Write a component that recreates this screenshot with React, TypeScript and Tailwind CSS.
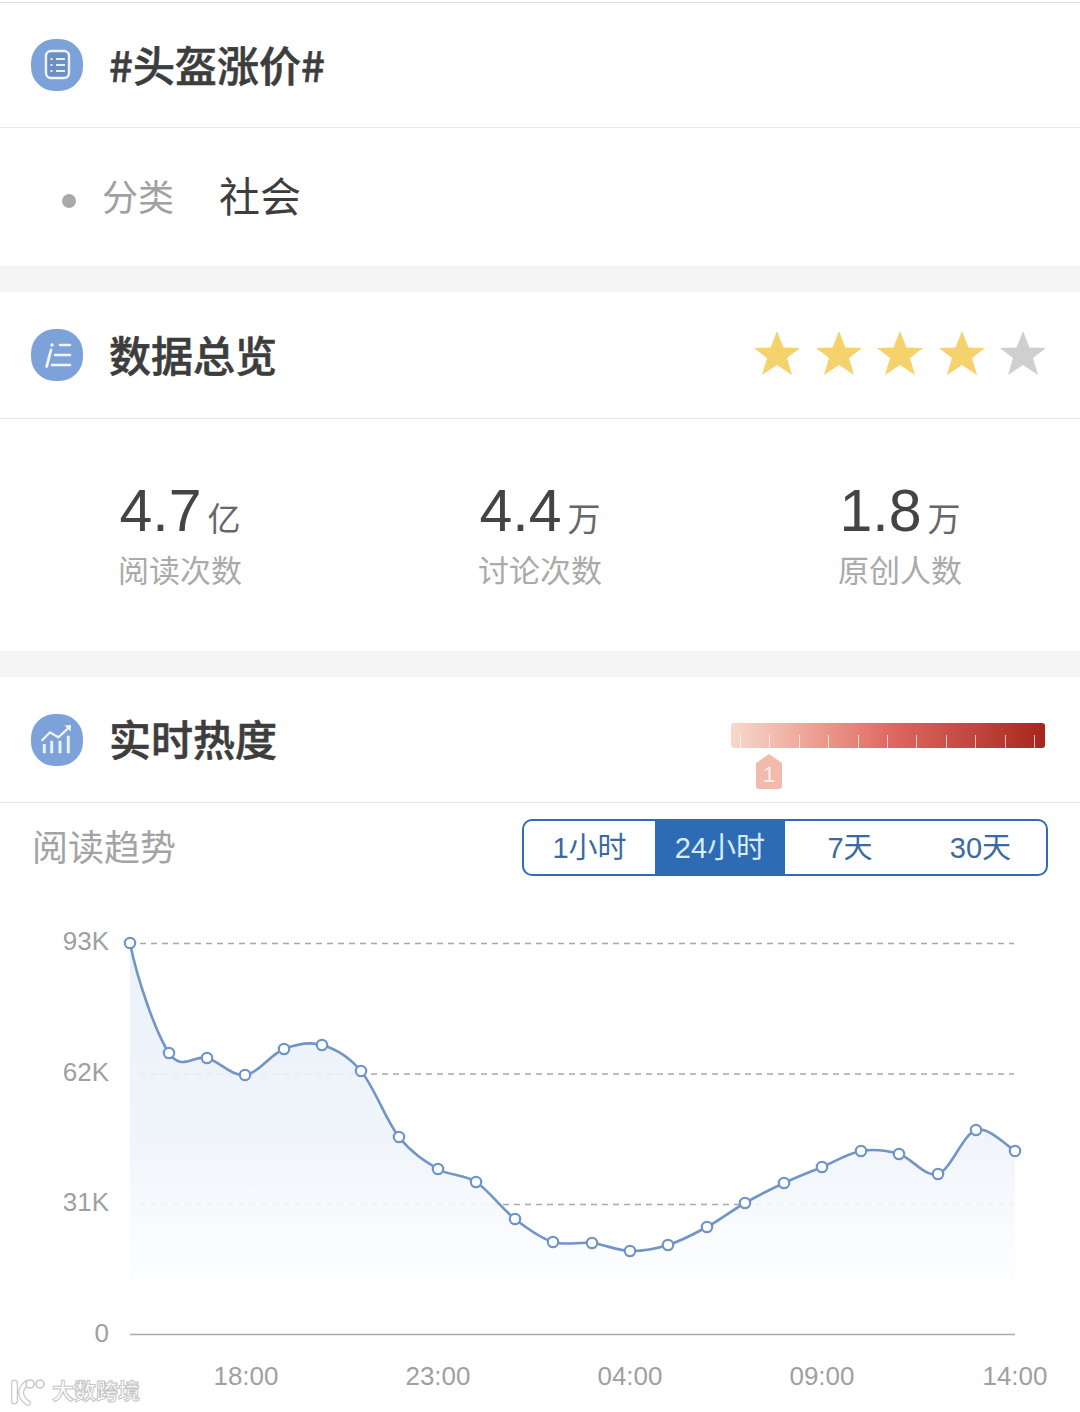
const points: [number, number][] = [
  [130, 943], [169, 1053], [207, 1058], [245, 1075], [284, 1049], [322, 1045],
  [361, 1071], [399, 1137], [438, 1169], [476, 1182], [515, 1219], [553, 1242],
  [592, 1243], [630, 1251], [668, 1245], [707, 1227], [745, 1203], [784, 1183],
  [822, 1167], [861, 1151], [899, 1154], [938, 1174], [976, 1130], [1015, 1151],
];

// catmull-rom through the points, first point leaves almost straight down
function smoothLine(pts: [number, number][]) {
  let d = `M${pts[0][0]} ${pts[0][1]}`;
  for (let i = 0; i < pts.length - 1; i++) {
    const p0: [number, number] = pts[i - 1] || [125, 830];
    const p1 = pts[i];
    const p2 = pts[i + 1];
    const p3 = pts[i + 2] || p2;
    const c1x = p1[0] + (p2[0] - p0[0]) / 6;
    const c1y = p1[1] + (p2[1] - p0[1]) / 6;
    const c2x = p2[0] - (p3[0] - p1[0]) / 6;
    const c2y = p2[1] - (p3[1] - p1[1]) / 6;
    d += ` C${c1x} ${c1y} ${c2x} ${c2y} ${p2[0]} ${p2[1]}`;
  }
  return d;
}

const linePath = smoothLine(points);

function IconBadge({ children }: { children: React.ReactNode }) {
  return (
    <div className="w-[52px] h-[52px] rounded-[24px] bg-[#7da2d9] flex items-center justify-center shrink-0">
      <svg viewBox="0 0 52 52" width="52" height="52" fill="none">{children}</svg>
    </div>
  );
}

function SectionHeader({ icon, title, right, className }: { icon: React.ReactNode; title: string; right?: React.ReactNode; className: string }) {
  return (
    <div className={`flex items-center justify-between pl-[31px] border-b border-[#e8e8e8] ${className}`}>
      <div className="flex items-center gap-[27px]">
        <IconBadge>{icon}</IconBadge>
        <h2 className="text-[42px] leading-none font-medium text-[#3d3d3d] -ml-[1px] -mt-[3px] font-['Noto_Sans_CJK_SC',sans-serif] [-webkit-text-stroke:0.6px_#3d3d3d]">{title}</h2>
      </div>
      {right}
    </div>
  );
}

function Star({ on }: { on: boolean }) {
  return (
    <svg viewBox="0 0 46 44" width="46" height="44" className={on ? "text-[#f5d26c]" : "text-[#cfcfcf]"}>
      <path d="M23 0 L29.5 16.5 L46 17 L33 27 L38 44 L23 34 L8 44 L13 27 L0 17 L16.5 16.5 Z" fill="currentColor" />
    </svg>
  );
}

function Stat({ value, unit, label }: { value: string; unit: string; label: string }) {
  return (
    <div className="flex flex-col items-center w-[124px]">
      <div className="flex items-baseline whitespace-nowrap text-[#444]">
        <span className="text-[59px] leading-[64px]">{value}</span>
        <span className="text-[33px] leading-none ml-[6px] text-[#666]">{unit}</span>
      </div>
      <div className="text-[31px] leading-[42px] text-[#aaa] whitespace-nowrap mt-[8px]">{label}</div>
    </div>
  );
}

const tabs = [
  { label: "1小时", w: "w-[131px]" },
  { label: "24小时", w: "w-[130px]", active: true },
  { label: "7天", w: "w-[130px]" },
  { label: "30天", w: "w-[131px]" },
];

const yLabels = [
  { text: "93K", y: 941 },
  { text: "62K", y: 1072 },
  { text: "31K", y: 1202 },
  { text: "0", y: 1333 },
];

const xLabels = [
  { text: "18:00", x: 246 },
  { text: "23:00", x: 438 },
  { text: "04:00", x: 630 },
  { text: "09:00", x: 822 },
  { text: "14:00", x: 1015 },
];

export default function App() {
  return (
    <div className="relative w-[1080px] h-[1412px] overflow-hidden bg-white font-['Liberation_Sans','Noto_Sans_CJK_SC',sans-serif]">
      <div className="h-[2px] bg-white" />
      <div className="border-t border-[#dedede]" />

      <SectionHeader
        className="h-[125px]"
        title="#头盔涨价#"
        icon={
          <>
            <rect x="15" y="12" width="23" height="27" rx="5" fill="#6e8fc4" stroke="#eef4fc" strokeWidth="2.4" />
            <path d="M25 20h9M25 26h9M25 32h9" stroke="#e6eefa" strokeWidth="2" />
            <path d="M19.5 20h2M19.5 26h2M19.5 32h2" stroke="#e6eefa" strokeWidth="2" />
          </>
        }
      />

      <div className="h-[138px] flex items-center pl-[62px] pb-[4px]">
        <span className="w-[14px] h-[14px] rounded-full bg-[#a9a9a9] mt-[12px]" />
        <span className="text-[36px] leading-none text-[#a0a0a0] ml-[26px] mt-[8px]">分类</span>
        <span className="text-[41px] leading-none text-[#3d3d3d] ml-[45px] mt-[6px]">社会</span>
      </div>

      <div className="h-[26px] bg-[#f5f5f5]" />

      <SectionHeader
        className="h-[127px]"
        title="数据总览"
        icon={
          <>
            <path d="M20 21 L15.7 37.5" stroke="#f2f6fc" strokeWidth="2.8" strokeLinecap="round" />
            <circle cx="21" cy="16" r="1.7" fill="#f2f6fc" />
            <path d="M29 16h10M24 26h15M21 36h18" stroke="#f2f6fc" strokeWidth="2.5" strokeLinecap="round" />
          </>
        }
        right={
          <div className="flex items-center gap-[15.5px] pr-[34px] mb-[4px]">
            <Star on />
            <Star on />
            <Star on />
            <Star on />
            <Star on={false} />
          </div>
        }
      />

      <div className="h-[232px] flex justify-between px-[118px] pt-[60px]">
        <Stat value="4.7" unit="亿" label="阅读次数" />
        <Stat value="4.4" unit="万" label="讨论次数" />
        <Stat value="1.8" unit="万" label="原创人数" />
      </div>

      <div className="h-[26px] bg-[#f5f5f5]" />

      <SectionHeader
        className="h-[126px]"
        title="实时热度"
        icon={
          <>
            <path d="M10.7 26.7 L19 18.3 L27.3 23.3 L37 14.5" stroke="#f2f6fc" strokeWidth="2.2" />
            <path d="M33.5 11.5 L40 11 L39.5 17.5 Z" fill="#f2f6fc" />
            <path d="M13.3 30v9.3M20.7 26.7v12.6M29 26.7v12.6M37.3 21.7v17.6" stroke="#e6f2fa" strokeWidth="3" />
          </>
        }
        right={
          <div className="relative mr-[35px] mb-[8px] w-[314px] h-[25px] rounded-[3px] bg-gradient-to-r from-[#f6d9cc] via-[#df6a62] to-[#a8241c] flex items-end justify-between pl-[9px] pr-[10px]">
            {Array.from({ length: 11 }).map((_, i) => (
              <span key={i} className="w-[1px] h-[13px] bg-white/70" />
            ))}
            <div className="absolute left-[25px] top-[31px] w-[26px] h-[35px] rounded-b-[3px] bg-[#f2b9ad] [clip-path:polygon(50%_0,100%_26%,100%_100%,0_100%,0_26%)] flex items-center justify-center pt-[6px] text-[22px] leading-none text-white/80">
              1
            </div>
          </div>
        }
      />

      <div className="flex items-center justify-between pl-[32px] pr-[32px] pt-[16px]">
        <span className="text-[36px] leading-none text-[#a3a3a3] mt-[2px]">阅读趋势</span>
        <div className="flex h-[57px] w-[526px] rounded-[10px] border-[2.5px] border-[#2f6cb3] overflow-hidden">
          {tabs.map((t) => (
            <div
              key={t.label}
              className={`${t.w} flex items-center justify-center text-[29px] leading-none pt-[2px] ${t.active ? "bg-[#2d6bb5] text-[#d8ecfa]" : "text-[#3a6a9e]"}`}
            >
              {t.label}
            </div>
          ))}
        </div>
      </div>

      <svg viewBox="0 876 1080 536" width="1080" height="536" className="block font-['Liberation_Sans',sans-serif]">
        <defs>
          <linearGradient id="area" x1="0" y1="943" x2="0" y2="1300" gradientUnits="userSpaceOnUse">
            <stop offset="0" stopColor="#e9f0fa" />
            <stop offset="0.55" stopColor="#eff4fb" />
            <stop offset="1" stopColor="#ffffff" />
          </linearGradient>
        </defs>

        {[943.5, 1074, 1204.5].map((y) => (
          <line key={y} x1="140" x2="1014" y1={y} y2={y} stroke="#a8a8a8" strokeWidth="1.3" strokeDasharray="6 5" />
        ))}
        <path d={`${linePath} L1015 1333 L130 1333 Z`} fill="url(#area)" fillOpacity="0.9" />
        <line x1="130" x2="1015" y1="1334.5" y2="1334.5" stroke="#aaaaaa" strokeWidth="1.6" />

        <path d={linePath} fill="none" stroke="#7095c6" strokeWidth="2.6" />
        {points.map(([x, y]) => (
          <circle key={x} cx={x} cy={y} r="5.2" fill="#fff" stroke="#7095c6" strokeWidth="2.2" />
        ))}

        {yLabels.map((l) => (
          <text key={l.text} x="109" y={l.y + 9} textAnchor="end" fontSize="26" fill="#9f9f9f">
            {l.text}
          </text>
        ))}
        {xLabels.map((l) => (
          <text key={l.text} x={l.x} y="1385" textAnchor="middle" fontSize="26" fill="#9f9f9f">
            {l.text}
          </text>
        ))}
      </svg>

      <div className="absolute left-[10px] bottom-[6px] flex items-center">
        <svg viewBox="0 0 40 28" width="40" height="28" fill="none">
          <path d="M4.5 5v18" stroke="#c8c8c8" strokeWidth="7" strokeLinecap="round" />
          <path d="M4.5 5v18" stroke="#fff" strokeWidth="4.5" strokeLinecap="round" />
          <path d="M17 5 C9 11 9 19 18 25" stroke="#c8c8c8" strokeWidth="6" strokeLinecap="round" />
          <path d="M17 5 C9 11 9 19 18 25" stroke="#fff" strokeWidth="3.5" strokeLinecap="round" />
          <circle cx="20" cy="6" r="4" fill="#fff" stroke="#c8c8c8" strokeWidth="1.6" />
          <circle cx="30" cy="6" r="4" fill="#fff" stroke="#c8c8c8" strokeWidth="1.6" />
        </svg>
        <span className="ml-[2px] text-[22px] leading-none font-bold text-white [-webkit-text-stroke:1px_#c4c4c4]">大数跨境</span>
      </div>
    </div>
  );
}
